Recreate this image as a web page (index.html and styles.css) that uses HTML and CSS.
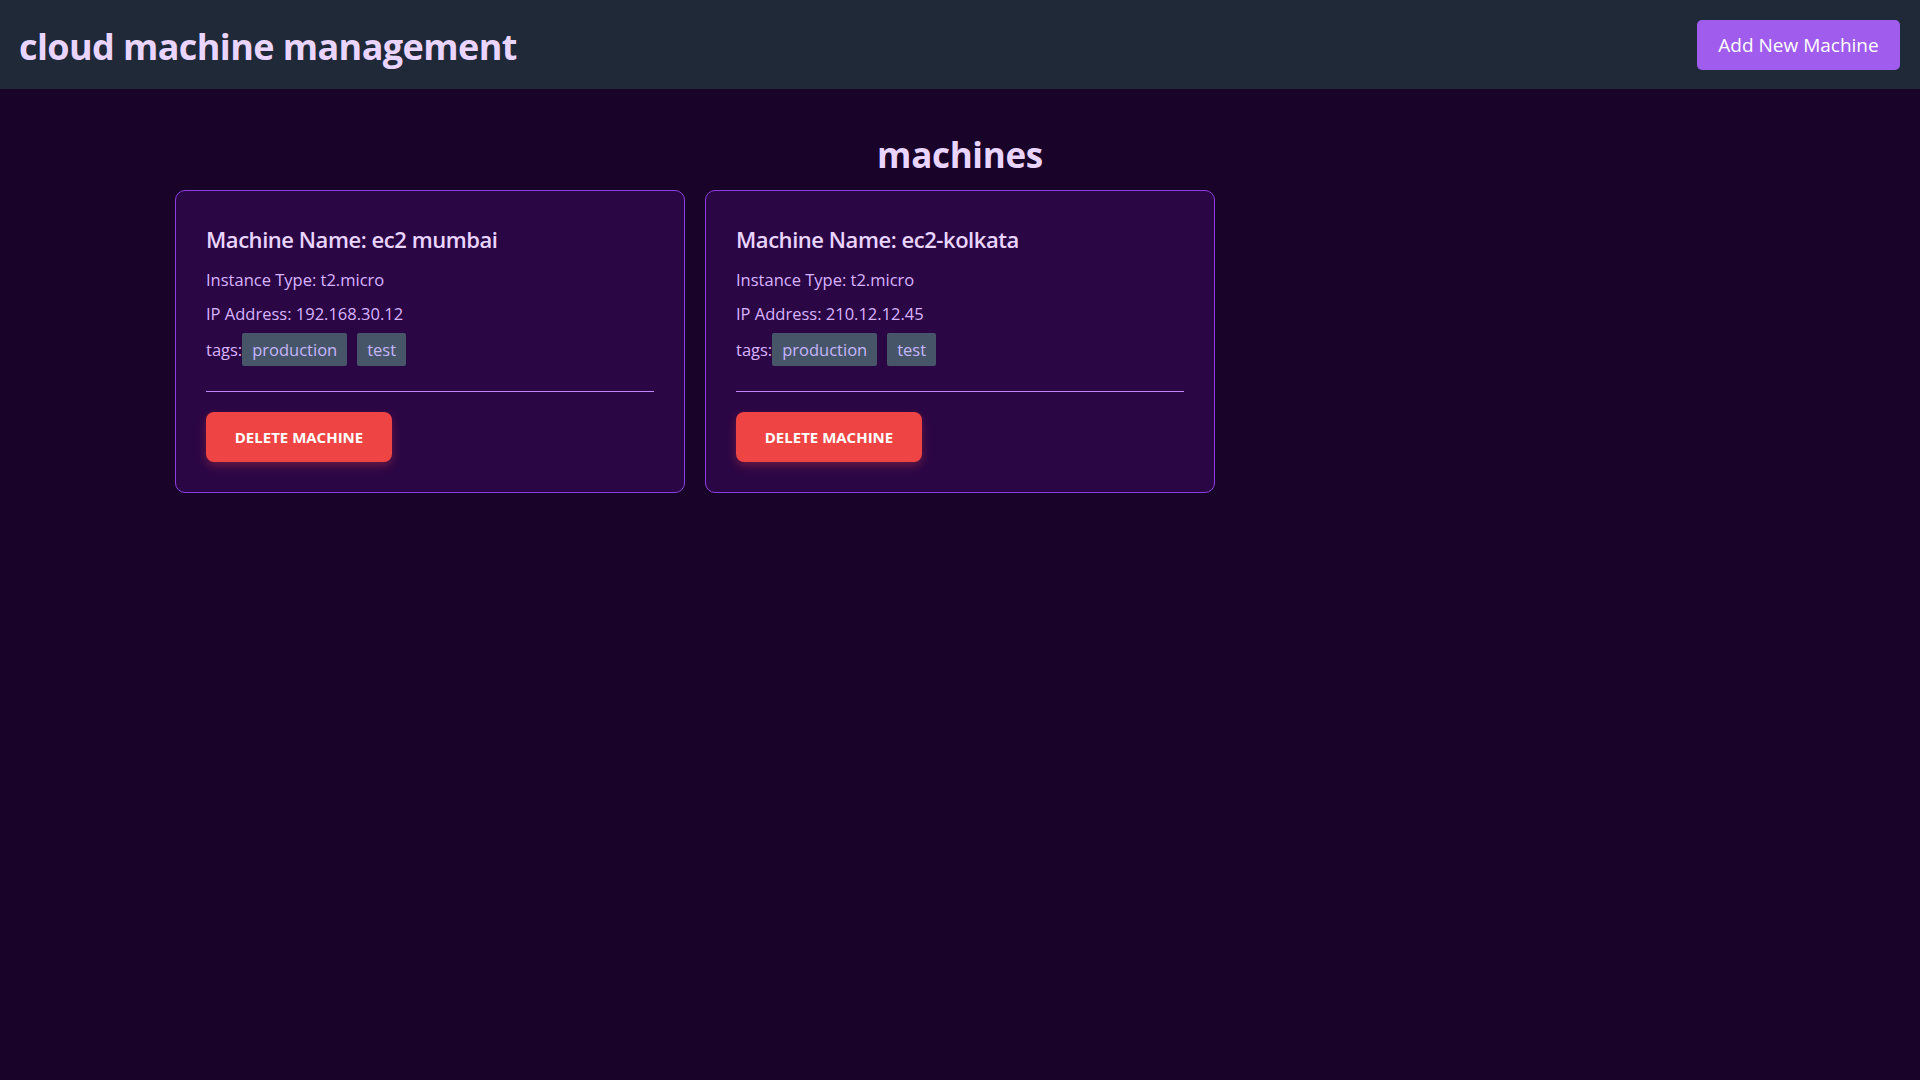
FILE: index.html
```html
<!DOCTYPE html>
<html lang="en">
<head>
<meta charset="utf-8">
<title>cloud machine management</title>
<link rel="stylesheet" href="styles.css">
</head>
<body>
<header class="topbar">
  <h1 class="brand">cloud machine management</h1>
  <button class="add-btn">Add New Machine</button>
</header>
<main class="main">
  <h2 class="section-title">machines</h2>
  <div class="grid">
    <div class="card">
      <h3 class="card-title">Machine Name: ec2 mumbai</h3>
      <p class="line">Instance Type: t2.micro</p>
      <p class="line">IP Address: 192.168.30.12</p>
      <div class="tags">tags:<span class="tag">production</span><span class="tag">test</span></div>
      <hr class="divider">
      <button class="del-btn">DELETE MACHINE</button>
    </div>
    <div class="card">
      <h3 class="card-title">Machine Name: ec2-kolkata</h3>
      <p class="line">Instance Type: t2.micro</p>
      <p class="line">IP Address: 210.12.12.45</p>
      <div class="tags">tags:<span class="tag">production</span><span class="tag">test</span></div>
      <hr class="divider">
      <button class="del-btn">DELETE MACHINE</button>
    </div>
  </div>
</main>
</body>
</html>
```
FILE: styles.css
```css
* { box-sizing: border-box; }
html, body { margin: 0; padding: 0; }
body {
  background: #1a0329;
  font-family: "Open Sans", "Noto Sans", sans-serif;
  color: #e9d5ff;
  min-height: 100vh;
}
.topbar {
  height: 89px;
  background: #1f2937;
  display: flex;
  align-items: center;
  justify-content: space-between;
  padding: 0 20px 0 19px;
}
.brand {
  margin: 4px 0 0;
  font-size: 36px;
  font-weight: 700;
  color: #e9d5ff;
  letter-spacing: -0.6px;
}
.add-btn {
  width: 203px;
  height: 50px;
  background: #a05ced;
  border: none;
  border-radius: 5px;
  color: #fff;
  font-family: inherit;
  font-size: 19px;
  margin-top: 1px;
}
.main {
  padding: 45px 175px 0;
}
.section-title {
  margin: 0 0 15px;
  text-align: center;
  font-size: 35px;
  line-height: 41px;
  font-weight: 700;
  color: #e9d5ff;
  letter-spacing: -0.3px;
}
.grid {
  display: grid;
  grid-template-columns: repeat(3, 1fr);
  gap: 20px;
}
.card {
  background: #2b0645;
  border: 1px solid #8b3fe0;
  border-radius: 10px;
  padding: 30px 30px 30px;
}
.card-title {
  margin: 0 0 8px;
  font-size: 22px;
  line-height: 36px;
  font-weight: 600;
  color: #e9d5ff;
  letter-spacing: -0.45px;
}
.line {
  margin: 0 0 5px;
  font-size: 16.5px;
  line-height: 29px;
  color: #d8b4fe;
}
.tags {
  display: flex;
  align-items: center;
  font-size: 16.5px;
  line-height: 33px;
  color: #d8b4fe;
}
.tag {
  background: #475569;
  border-radius: 2px;
  padding: 0 10px;
  margin-right: 10px;
  color: #c4b5fd;
  height: 33px;
}
.divider {
  border: none;
  border-top: 1px solid #c084fc;
  margin: 25px 0 20px;
}
.del-btn {
  width: 186px;
  height: 50px;
  background: #ef4444;
  border: none;
  border-radius: 8px;
  color: #fff;
  font-family: inherit;
  font-size: 15px;
  font-weight: 700;
  box-shadow: 0 4px 10px rgba(239, 68, 68, 0.3);
}
```
